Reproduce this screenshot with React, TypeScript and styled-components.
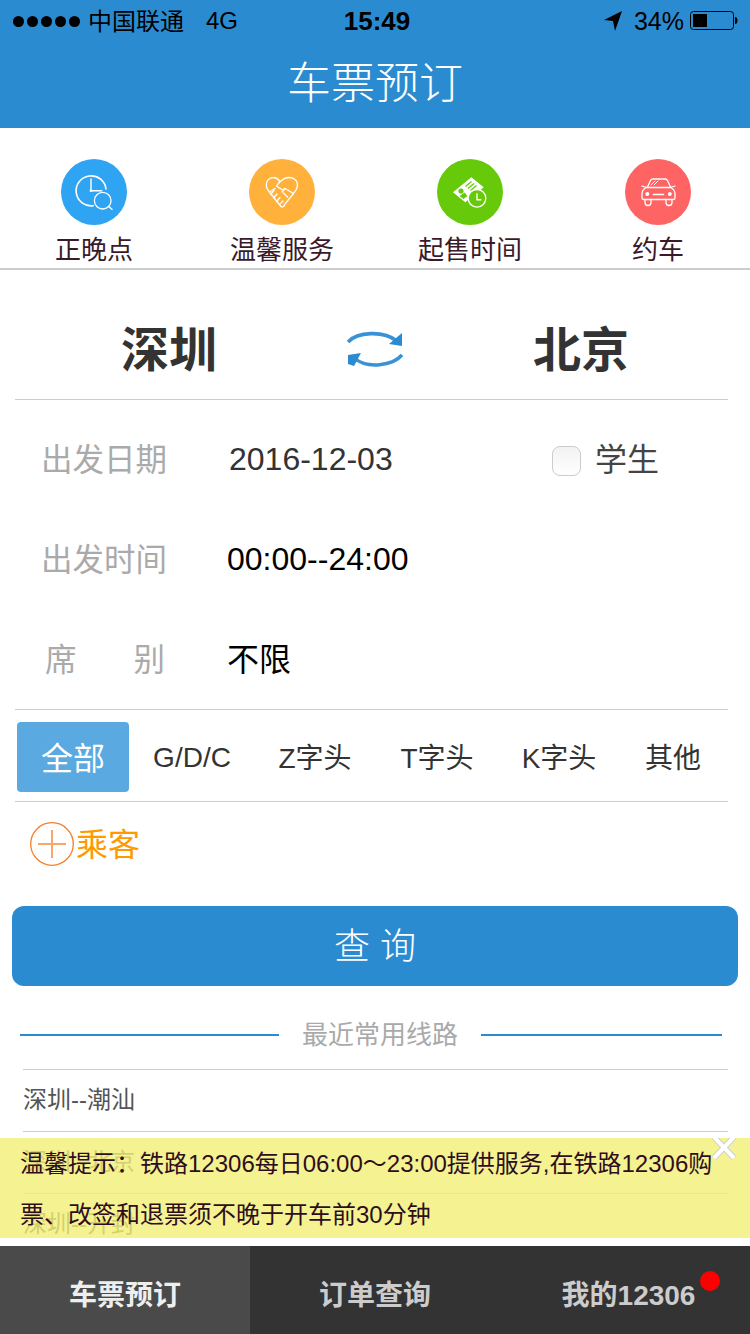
import styled, { createGlobalStyle } from "styled-components";

const GlobalStyle = createGlobalStyle`
  html, body {
    margin: 0;
    padding: 0;
    background: #fff;
    font-family: "Liberation Sans", "Noto Sans CJK SC", sans-serif;
  }
  * { box-sizing: border-box; }
`;

const Page = styled.div`
  position: relative;
  width: 750px;
  height: 1334px;
  overflow: hidden;
  background: #fff;
`;

const Header = styled.header`
  height: 128px;
  background: #2b8bd1;
`;

const StatusBar = styled.div`
  height: 40px;
  display: flex;
  align-items: center;
  padding: 2px 12px 0 13px;
  color: #000;
  font-size: 24px;
`;

const Dots = styled.span`
  display: flex;
  gap: 3px;
  margin-right: 8px;
`;

const Dot = styled.i`
  width: 11px;
  height: 11px;
  border-radius: 50%;
  background: #000;
`;

const Carrier = styled.span`
  margin-bottom: 4px;
`;

const Network = styled.span`
  margin-left: 22px;
`;

const Clock = styled.span`
  flex: 1;
  text-align: center;
  font-size: 26px;
  font-weight: 700;
  padding-right: 88px;
`;

const Percent = styled.span`
  font-size: 25px;
  margin: 0 6px 0 12px;
`;

const Title = styled.h1`
  margin: 0;
  height: 88px;
  line-height: 88px;
  text-align: center;
  color: #fff;
  font-size: 44px;
  font-weight: 300;
`;

const QuickNav = styled.nav`
  height: 142px;
  display: grid;
  grid-template-columns: repeat(4, 188px);
  padding-top: 31px;
  border-bottom: 2px solid #ccc;
`;

const QuickItem = styled.a`
  display: flex;
  flex-direction: column;
  align-items: center;
  color: #3a1a2a;
  font-size: 26px;
  line-height: 50px;
`;

const IconDisc = styled.span<{ $color: string }>`
  width: 66px;
  height: 66px;
  border-radius: 50%;
  background: ${(p) => p.$color};
  display: block;
`;

const RouteRow = styled.section`
  height: 130px;
  margin: 0 22px 0 15px;
  padding-top: 26px;
  display: grid;
  grid-template-columns: 308px 104px 308px;
  align-items: center;
  border-bottom: 1px solid #ccc;
`;

const City = styled.div`
  text-align: center;
  font-size: 48px;
  font-weight: 700;
  color: #333;
  padding-bottom: 4px;
`;

const SwapWrap = styled.div`
  display: flex;
  justify-content: center;
  padding-top: 6px;
`;

const FormRows = styled.div`
  height: 310px;
  padding-top: 9px;
  border-bottom: 1px solid #ccc;
  margin: 0 22px 0 15px;
`;

const FormRow = styled.div`
  height: 100px;
  display: flex;
  align-items: center;
  padding-left: 26px;
`;

const FieldLabel = styled.span`
  width: 186px;
  margin-bottom: 4px;
  font-size: 31.5px;
  color: #aaa;
`;

const SpacedLabel = styled(FieldLabel)`
  display: flex;
  padding-left: 4px;
  gap: 57px;
`;

const FieldValue = styled.span<{ $dark?: boolean; $cjk?: boolean; $inset?: number }>`
  font-size: 32px;
  color: ${(p) => (p.$dark ? "#000" : "#333")};
  margin-bottom: ${(p) => (p.$cjk ? "4px" : "0")};
  margin-left: ${(p) => p.$inset ?? 0}px;
`;

const StudentCheck = styled.label`
  display: flex;
  align-items: center;
  margin-left: auto;
  margin-right: 69px;
  gap: 14px;
  font-size: 32px;
  line-height: 36px;
  color: #444;
`;

const CheckBox = styled.span`
  width: 29px;
  height: 30px;
  margin-top: 4px;
  border: 1px solid #ccc;
  border-radius: 8px;
  background: linear-gradient(#f2f2f2, #fff);
`;

const StudentText = styled.span`
  margin-top: 2px;
`;

const TrainTabs = styled.div`
  height: 92px;
  margin: 0 22px 0 15px;
  padding: 12px 0 9px 2px;
  display: grid;
  grid-template-columns: 112px 126px 120px 124px 120px 108px;
  border-bottom: 1px solid #ccc;
`;

// the Latin-only tab sits lower than the ones with Chinese glyphs in them
const TrainTab = styled.span<{ $active?: boolean; $latin?: boolean }>`
  display: flex;
  align-items: center;
  justify-content: center;
  padding: ${(p) => (p.$latin ? "1px 0 0" : "0 0 3px")};
  border-radius: 4px;
  font-size: ${(p) => (p.$active ? "32px" : "28px")};
  color: ${(p) => (p.$active ? "#fff" : "#333")};
  background: ${(p) => (p.$active ? "#5aa9e0" : "transparent")};
`;

const Passenger = styled.div`
  height: 104px;
  padding: 20px 0 0 30px;
  display: flex;
  align-items: flex-start;
  gap: 2px;
  color: #f90;
  font-size: 32px;
  line-height: 46px;
`;

const QueryButton = styled.button`
  display: block;
  width: 726px;
  height: 80px;
  margin-left: 12px;
  padding: 0 0 6px 10px;
  border: 0;
  border-radius: 12px;
  background: #2b8bd1;
  color: #fff;
  font-family: inherit;
  font-size: 36px;
  letter-spacing: 10px;
  font-weight: 300;
`;

const RecentHeading = styled.div`
  height: 83px;
  padding-top: 14px;
  margin: 0 28px 0 20px;
  display: flex;
  align-items: center;
  color: #aaa;
  font-size: 26px;
`;

const HeadingRule = styled.span<{ $width: number }>`
  width: ${(p) => p.$width}px;
  height: 2px;
  background: #2b8bd1;
`;

const HeadingText = styled.span`
  width: 202px;
  margin-bottom: 4px;
  text-align: center;
`;

const RecentList = styled.ul`
  list-style: none;
  margin: 0 22px 0 23px;
  padding: 0;
`;

const RecentItem = styled.li`
  height: 62px;
  line-height: 59px;
  border-top: 1px solid #ccc;
  color: #555;
  font-size: 24px;
`;

const Notice = styled.aside`
  position: absolute;
  left: 0;
  right: 0;
  top: 1138px;
  height: 100px;
  padding: 0 30px 0 21px;
  background: rgba(241, 239, 117, 0.8);
  color: #2f0d1c;
  font-size: 24px;
  line-height: 51px;
`;

const NoticeText = styled.div`
  margin-left: -1px;
`;

const NoticeClose = styled.svg`
  position: absolute;
  right: 13px;
  top: 0;
`;

const TabBar = styled.footer`
  position: absolute;
  left: 0;
  right: 0;
  bottom: 0;
  height: 88px;
  display: grid;
  grid-template-columns: repeat(3, 250px);
  background: #333;
`;

const Tab = styled.div<{ $active?: boolean }>`
  position: relative;
  display: flex;
  align-items: center;
  justify-content: center;
  padding-top: 5px;
  font-size: 28px;
  font-weight: 700;
  color: ${(p) => (p.$active ? "#eee" : "#ccc")};
  background: ${(p) => (p.$active ? "#4a4a4a" : "transparent")};
`;

const AccountTab = styled(Tab)`
  padding-left: 7px;
`;

const RedDot = styled.i`
  position: absolute;
  left: 200px;
  top: 25px;
  width: 20px;
  height: 20px;
  border-radius: 50%;
  background: #f00;
`;

const ClockSearchIcon = () => (
  <svg width="66" height="66" viewBox="0 0 66 66" fill="none" stroke="#fff" strokeLinecap="round">
    <path d="M45 30 A15 15 0 1 0 32.300 46.700" strokeWidth="1.6" />
    <path d="M30 20 V31.700 H40.700" strokeWidth="1.400" />
    <circle cx="30" cy="31.700" r="1.400" fill="#fff" stroke="none" />
    <circle cx="41.700" cy="41.700" r="8.300" strokeWidth="1.300" />
    <path d="M47.700 47.500 L51 50.300" strokeWidth="1.500" />
  </svg>
);

const HandshakeIcon = () => (
  <svg width="66" height="66" viewBox="0 0 66 66" fill="none" stroke="#fff" strokeWidth="1.300" strokeLinejoin="round" strokeLinecap="round">
    <path d="M20.500 33 C17.500 30 17 27 17.500 24 C18 20.500 21.500 18.500 24.500 18.500 C27 18.500 29 20 30.500 22" />
    <path d="M27.500 27 C31 22 35 18.500 40 18.500 C45 18.500 48.500 21.500 48.500 25.500 C48.500 29 46.500 32 44.500 34.500" />
    <path d="M27.500 27 L32 30 C33.500 31 35 30.500 36 29.500 L44.500 34.500 L36 45 C35 48 33.500 48.500 32 47.500 L20.500 33 L26 29.500" />
    <path d="M25 31.500 L21.500 35.500 M28 35 L24.500 39 M31 38.500 L27.500 42.500 M34 42 L30.500 45.500" />
    <path d="M36 29.500 L33 33 M38.500 38 L34.500 34" />
  </svg>
);

const TicketIcon = () => (
  <svg width="66" height="66" viewBox="0 0 66 66" fill="none">
    <path d="M34.300 18.300 L46.700 28.300 L28.300 43.300 L16 33.300 Z" fill="#fff" />
    <circle cx="24" cy="32" r="2.600" fill="#66c90a" />
    <path d="M22.500 37 L27.500 33.500 L30.500 37 L26.500 40 Z" fill="#66c90a" />
    <path d="M28.500 27.500 L34.500 22.500 M31 29.500 L37 24.500 M33.500 31.500 L39.500 26.500" stroke="#66c90a" strokeWidth="1.300" />
    <circle cx="40" cy="39.300" r="8.800" fill="#66c90a" stroke="#fff" strokeWidth="1.300" />
    <path d="M40 34.300 V40.700 H44.300" stroke="#fff" strokeWidth="1.400" />
  </svg>
);

const CarIcon = () => (
  <svg width="66" height="66" viewBox="0 0 66 66" fill="none" stroke="#fff" strokeWidth="1.300" strokeLinejoin="round" strokeLinecap="round">
    <path d="M22.500 28 L25.500 21.500 C26 20.500 27 20 28 20 H40 C41 20 42 20.500 42.500 21.500 L45.500 28" />
    <path d="M21 28.500 H46 C48.500 30 50 32 50 35 V39 C50 40 49.500 40.500 48.500 40.500 H18.500 C17.500 40.500 17 40 17 39 V35 C17 32 18.500 30 21 28.500 Z" />
    <path d="M20 40.500 V43.500 C20 47.500 26 47.500 26 43.500 V40.500 M41 40.500 V43.500 C41 47.500 47 47.500 47 43.500 V40.500" />
    <path d="M21.500 28.500 L17 27 M45.500 28.500 L50 27" />
    <circle cx="22.300" cy="35" r="2" fill="#fff" stroke="none" />
    <circle cx="44.800" cy="35" r="2" fill="#fff" stroke="none" />
    <path d="M28.300 35.500 H38.500" strokeWidth="1.500" />
    <path d="M26 26 L30 22 M29 26 L33 22" strokeWidth="1" />
  </svg>
);

const SwapIcon = () => (
  <svg width="56" height="44" viewBox="0 0 56 44" fill="none">
    <path d="M1 13 C10 3 36 1 50 12" stroke="#3a92d6" strokeWidth="3.600" />
    <path d="M55 4 L55 17 L42 15 Z" fill="#2b8bd1" />
    <path d="M55 26 C46 37 20 40 7 29" stroke="#3a92d6" strokeWidth="3.600" />
    <path d="M1 26 L14 24 L7 37 L1 35 Z" fill="#2b8bd1" />
  </svg>
);

const PlusCircle = () => (
  <svg width="44" height="44" viewBox="0 0 44 44" fill="none">
    <circle cx="22" cy="22" r="21.300" stroke="#f57f2a" strokeWidth="1.300" />
    <path d="M8 22 H36 M22 8 V36" stroke="#f9a66c" strokeWidth="2" />
  </svg>
);

const LocationArrow = () => (
  <svg width="18" height="20" viewBox="0 0 18 20">
    <path d="M18 0 L0 9 L9 10 L11 20 Z" fill="#000" />
  </svg>
);

const Battery = () => (
  <svg width="48" height="20" viewBox="0 0 48 20" fill="none">
    <rect x="0.500" y="0.500" width="43" height="18" rx="3" stroke="#000" />
    <rect x="3" y="3" width="14" height="13" fill="#000" />
    <path d="M45 6 C47 6 47.500 8 47.500 9.500 C47.500 11 47 13 45 13 Z" fill="#000" />
  </svg>
);

const quickLinks = [
  { label: "正晚点", color: "#2fa4f2", icon: <ClockSearchIcon /> },
  { label: "温馨服务", color: "#ffb13b", icon: <HandshakeIcon /> },
  { label: "起售时间", color: "#66c90a", icon: <TicketIcon /> },
  { label: "约车", color: "#ff6464", icon: <CarIcon /> },
];

const trainTypes = ["全部", "G/D/C", "Z字头", "T字头", "K字头", "其他"];
const recentRoutes = ["深圳--潮汕", "深圳--北京", "深圳--开封"];

function App() {
  return (
    <Page>
      <GlobalStyle />
      <Header>
        <StatusBar>
          <Dots>
            {[0, 1, 2, 3, 4].map((i) => (
              <Dot key={i} />
            ))}
          </Dots>
          <Carrier>中国联通</Carrier>
          <Network>4G</Network>
          <Clock>15:49</Clock>
          <LocationArrow />
          <Percent>34%</Percent>
          <Battery />
        </StatusBar>
        <Title>车票预订</Title>
      </Header>

      <QuickNav>
        {quickLinks.map((link) => (
          <QuickItem key={link.label}>
            <IconDisc $color={link.color}>{link.icon}</IconDisc>
            {link.label}
          </QuickItem>
        ))}
      </QuickNav>

      <RouteRow>
        <City>深圳</City>
        <SwapWrap>
          <SwapIcon />
        </SwapWrap>
        <City>北京</City>
      </RouteRow>

      <FormRows>
        <FormRow>
          <FieldLabel>出发日期</FieldLabel>
          <FieldValue $inset={2}>2016-12-03</FieldValue>
          <StudentCheck>
            <CheckBox />
            <StudentText>学生</StudentText>
          </StudentCheck>
        </FormRow>
        <FormRow>
          <FieldLabel>出发时间</FieldLabel>
          <FieldValue $dark>00:00--24:00</FieldValue>
        </FormRow>
        <FormRow>
          <SpacedLabel>
            <span>席</span>
            <span>别</span>
          </SpacedLabel>
          <FieldValue $dark $cjk>
            不限
          </FieldValue>
        </FormRow>
      </FormRows>

      <TrainTabs>
        {trainTypes.map((type, i) => (
          <TrainTab key={type} $active={i === 0} $latin={type === "G/D/C"}>
            {type}
          </TrainTab>
        ))}
      </TrainTabs>

      <Passenger>
        <PlusCircle />
        乘客
      </Passenger>

      <QueryButton>查询</QueryButton>

      <RecentHeading>
        <HeadingRule $width={259} />
        <HeadingText>最近常用线路</HeadingText>
        <HeadingRule $width={241} />
      </RecentHeading>

      <RecentList>
        {recentRoutes.map((route) => (
          <RecentItem key={route}>{route}</RecentItem>
        ))}
      </RecentList>

      <Notice>
        <NoticeText>
          温馨提示：铁路12306每日06:00～23:00提供服务,在铁路12306购票、改签和退票须不晚于开车前30分钟
        </NoticeText>
        <NoticeClose width="26" height="24" viewBox="0 0 26 24">
          <path d="M3 -1 L23 20 M23 -1 L3 20" stroke="#ccc" strokeWidth="6" />
          <path d="M3 -1 L23 20 M23 -1 L3 20" stroke="#fff" strokeWidth="4" />
        </NoticeClose>
      </Notice>

      <TabBar>
        <Tab $active>车票预订</Tab>
        <Tab>订单查询</Tab>
        <AccountTab>
          我的12306
          <RedDot />
        </AccountTab>
      </TabBar>
    </Page>
  );
}

export default App;
